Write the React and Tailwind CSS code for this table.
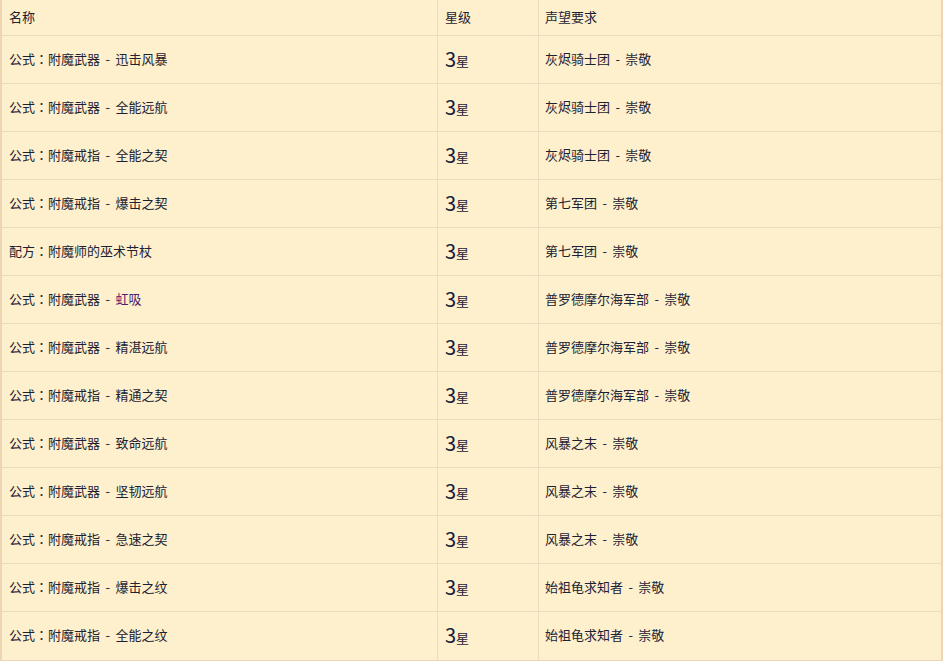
import React from "react";

const rows = [
  ["公式", "附魔武器", "迅击风暴", "灰烬骑士团"],
  ["公式", "附魔武器", "全能远航", "灰烬骑士团"],
  ["公式", "附魔戒指", "全能之契", "灰烬骑士团"],
  ["公式", "附魔戒指", "爆击之契", "第七军团"],
  ["配方", "附魔师的巫术节杖", null, "第七军团"],
  ["公式", "附魔武器", "虹吸", "普罗德摩尔海军部", true],
  ["公式", "附魔武器", "精湛远航", "普罗德摩尔海军部"],
  ["公式", "附魔戒指", "精通之契", "普罗德摩尔海军部"],
  ["公式", "附魔武器", "致命远航", "风暴之末"],
  ["公式", "附魔武器", "坚韧远航", "风暴之末"],
  ["公式", "附魔戒指", "急速之契", "风暴之末"],
  ["公式", "附魔戒指", "爆击之纹", "始祖龟求知者"],
  ["公式", "附魔戒指", "全能之纹", "始祖龟求知者"],
];

const Dash = () => <span className="px-[2.5px]">-</span>;
const Colon = () => (
  <span style={{ fontFamily: '"Noto Sans CJK TC", sans-serif' }}>：</span>
);

export default function App() {
  return (
    <div
      className="w-[944px] h-[661px] bg-white text-[13px] text-[#1d2233]"
      style={{ fontFamily: '"Noto Sans CJK SC", "Noto Sans", sans-serif' }}
    >
      <div className="w-[943px] bg-[#fef0cd] border-l-2 border-r-2 border-b-2 border-[#edd5b3]">
        <div className="grid grid-cols-[435px_101px_1fr] h-[36px] border-b border-[#ecdcbe] items-center">
          <div className="pl-[7px] pb-[1px]">名称</div>
          <div className="pl-[7px] pb-[1px] border-l border-[#ecdcbe] h-full flex items-center">星级</div>
          <div className="pl-[6px] pb-[1px] border-l border-[#ecdcbe] h-full flex items-center">声望要求</div>
        </div>
        {rows.map((r, i) => (
          <div
            key={i}
            className={`grid grid-cols-[435px_101px_1fr] h-[48px] items-center ${
              i < rows.length - 1 ? "border-b border-[#ecdcbe]" : ""
            }`}
          >
            <div className="pl-[7px] pb-[2px] whitespace-pre">
              {r[0]}
              <Colon />
              {r[1]}
              {r[2] && (
                <>
                  {" "}
                  <Dash />{" "}
                  {r[4] ? <span className="text-[#4e1f6e]">{r[2]}</span> : r[2]}
                </>
              )}
            </div>
            <div className="pl-[7px] pb-[2px] border-l border-[#ecdcbe] h-full flex items-center">
              <span className="text-[20px] leading-none text-[#15203a]">3</span>
              <span className="text-[13px] leading-none mt-[4px]">星</span>
            </div>
            <div className="pl-[6px] pb-[2px] border-l border-[#ecdcbe] h-full flex items-center whitespace-pre">
              {r[3]} <Dash /> 崇敬
            </div>
          </div>
        ))}
      </div>
    </div>
  );
}
